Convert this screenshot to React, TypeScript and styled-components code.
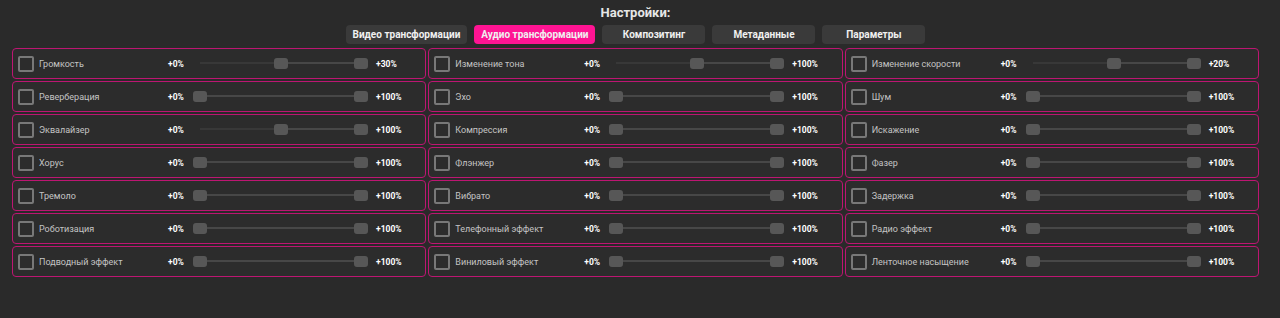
import styled, { createGlobalStyle } from 'styled-components'

const GlobalStyle = createGlobalStyle`
  html, body {
    margin: 0;
    background: #2a2a2a;
    font-family: Roboto, 'Liberation Sans', sans-serif;
  }
`

const Page = styled.div`
  box-sizing: border-box;
  width: 1280px;
  height: 318px;
  padding: 4px 21px 0 12px;
  display: flex;
  flex-direction: column;
  align-items: center;
`

const Title = styled.h1`
  margin: 0;
  height: 17px;
  line-height: 17px;
  font-size: 13px;
  font-weight: 700;
  color: #e6e6e6;
`

const Tabs = styled.div`
  display: flex;
  gap: 7px;
  margin-top: 4px;
`

const Tab = styled.button<{ $active?: boolean }>`
  height: 19px;
  min-width: 103px;
  padding: 0 7px;
  border: none;
  border-radius: 4px;
  background: ${p => (p.$active ? '#ff1493' : '#3a3a3a')};
  color: #f0f0f0;
  font-family: inherit;
  font-size: 10px;
  font-weight: 700;
  cursor: pointer;
`

const Grid = styled.div`
  width: 100%;
  margin-top: 4px;
  display: grid;
  grid-template-columns: repeat(3, 1fr);
  grid-template-rows: repeat(7, 31px);
  grid-auto-flow: column;
  gap: 2px;
`

const Card = styled.div`
  box-sizing: border-box;
  display: flex;
  align-items: center;
  padding: 0 5px;
  border: 1px solid #bd1672;
  border-radius: 4px;
  background: #2c2c2c;
`

const Check = styled.span`
  box-sizing: border-box;
  width: 16px;
  height: 16px;
  margin-right: 5px;
  border: 2px solid #787878;
  border-radius: 2px;
  flex-shrink: 0;
`

const Label = styled.span`
  width: 124px;
  margin-right: 5px;
  font-size: 9px;
  color: #c4c4c4;
  white-space: nowrap;
`

const Value = styled.span<{ $wide?: boolean }>`
  width: ${p => (p.$wide ? 'auto' : '25px')};
  font-size: 8.5px;
  font-weight: 700;
  color: #ffffff;
`

const Slider = styled.div`
  position: relative;
  width: 175px;
  height: 11px;
  margin-right: 8px;
`

const Track = styled.div`
  position: absolute;
  left: 7px;
  right: 7px;
  top: 4px;
  height: 2px;
  background: #383838;
`

const Range = styled.div`
  position: absolute;
  top: 4px;
  height: 2px;
  background: #474747;
`

const Thumb = styled.div`
  position: absolute;
  top: 0;
  width: 14px;
  height: 11px;
  border-radius: 3px;
  background: #575757;
`

type Effect = { name: string; max: string; pos: number }

const columns: Effect[][] = [
  [
    { name: 'Громкость', max: '+30%', pos: 0.5 },
    { name: 'Реверберация', max: '+100%', pos: 0 },
    { name: 'Эквалайзер', max: '+100%', pos: 0.5 },
    { name: 'Хорус', max: '+100%', pos: 0 },
    { name: 'Тремоло', max: '+100%', pos: 0 },
    { name: 'Роботизация', max: '+100%', pos: 0 },
    { name: 'Подводный эффект', max: '+100%', pos: 0 },
  ],
  [
    { name: 'Изменение тона', max: '+100%', pos: 0.5 },
    { name: 'Эхо', max: '+100%', pos: 0 },
    { name: 'Компрессия', max: '+100%', pos: 0 },
    { name: 'Флэнжер', max: '+100%', pos: 0 },
    { name: 'Вибрато', max: '+100%', pos: 0 },
    { name: 'Телефонный эффект', max: '+100%', pos: 0 },
    { name: 'Виниловый эффект', max: '+100%', pos: 0 },
  ],
  [
    { name: 'Изменение скорости', max: '+20%', pos: 0.5 },
    { name: 'Шум', max: '+100%', pos: 0 },
    { name: 'Искажение', max: '+100%', pos: 0 },
    { name: 'Фазер', max: '+100%', pos: 0 },
    { name: 'Задержка', max: '+100%', pos: 0 },
    { name: 'Радио эффект', max: '+100%', pos: 0 },
    { name: 'Ленточное насыщение', max: '+100%', pos: 0 },
  ],
]

const TRAVEL = 161

function EffectRow({ effect }: { effect: Effect }) {
  const left = Math.round(effect.pos * TRAVEL)
  return (
    <Card>
      <Check />
      <Label>{effect.name}</Label>
      <Value>+0%</Value>
      <Slider>
        <Track />
        <Range style={{ left: left + 7, width: TRAVEL - left }} />
        <Thumb style={{ left }} />
        <Thumb style={{ left: TRAVEL }} />
      </Slider>
      <Value $wide>{effect.max}</Value>
    </Card>
  )
}

const tabs = ['Видео трансформации', 'Аудио трансформации', 'Композитинг', 'Метаданные', 'Параметры']

export default function App() {
  return (
    <Page>
      <GlobalStyle />
      <Title>Настройки:</Title>
      <Tabs>
        {tabs.map(t => (
          <Tab key={t} $active={t === 'Аудио трансформации'}>
            {t}
          </Tab>
        ))}
      </Tabs>
      <Grid>
        {columns.flat().map(e => (
          <EffectRow key={e.name} effect={e} />
        ))}
      </Grid>
    </Page>
  )
}
